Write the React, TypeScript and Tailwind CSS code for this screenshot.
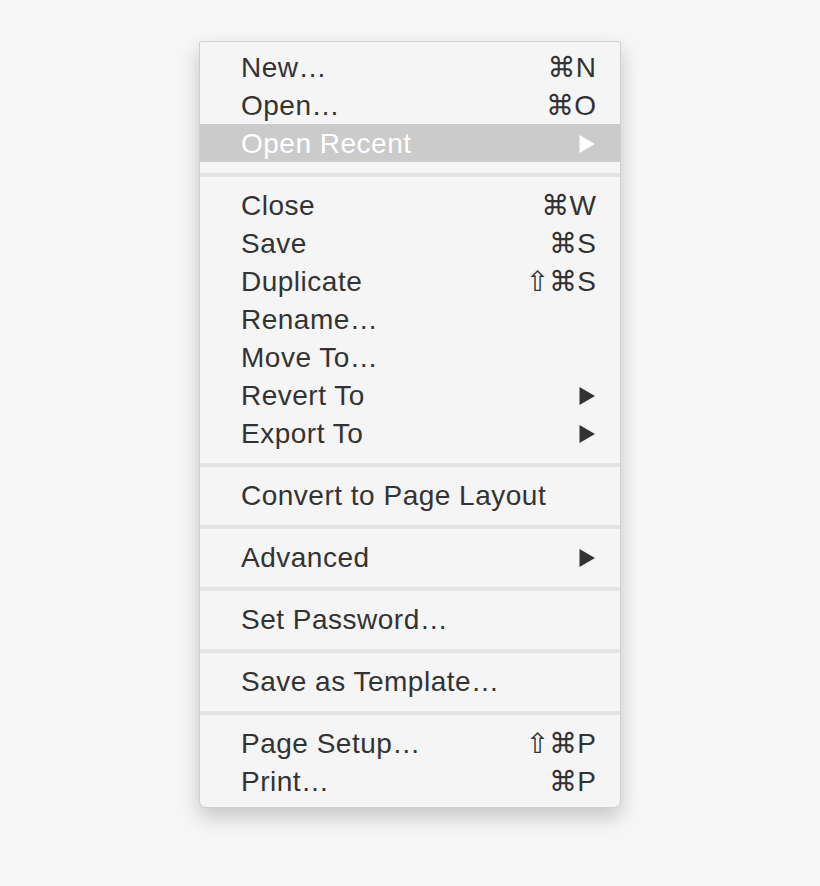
import React from "react";

type Item =
  | { type: "item"; label: string; shortcut?: string; submenu?: boolean; active?: boolean }
  | { type: "sep" };

const items: Item[] = [
  { type: "item", label: "New…", shortcut: "⌘N" },
  { type: "item", label: "Open…", shortcut: "⌘O" },
  { type: "item", label: "Open Recent", submenu: true, active: true },
  { type: "sep" },
  { type: "item", label: "Close", shortcut: "⌘W" },
  { type: "item", label: "Save", shortcut: "⌘S" },
  { type: "item", label: "Duplicate", shortcut: "⇧⌘S" },
  { type: "item", label: "Rename…" },
  { type: "item", label: "Move To…" },
  { type: "item", label: "Revert To", submenu: true },
  { type: "item", label: "Export To", submenu: true },
  { type: "sep" },
  { type: "item", label: "Convert to Page Layout" },
  { type: "sep" },
  { type: "item", label: "Advanced", submenu: true },
  { type: "sep" },
  { type: "item", label: "Set Password…" },
  { type: "sep" },
  { type: "item", label: "Save as Template…" },
  { type: "sep" },
  { type: "item", label: "Page Setup…", shortcut: "⇧⌘P" },
  { type: "item", label: "Print…", shortcut: "⌘P" },
];

function Arrow({ white }: { white?: boolean }) {
  return (
    <svg width="16" height="20" viewBox="0 0 16 20" className="mr-[1px]">
      <path d="M0.5 1 L16 10 L0.5 19 Z" fill={white ? "#ffffff" : "#333333"} />
    </svg>
  );
}

export default function App() {
  return (
    <div
      className="w-[820px] h-[886px] bg-[#f6f6f6] pt-[41px] pl-[199px]"
      style={{ fontFamily: '"Liberation Sans", "DejaVu Sans", Arial, sans-serif' }}
    >
      <div className="w-[422px] bg-[#f5f5f5] border border-[#cfcfcf] rounded-b-[7px] rounded-t-[2px] pt-[6px] pb-[7px] shadow-[0_9px_20px_rgba(0,0,0,0.2)]">
        {items.map((it, i) =>
          it.type === "sep" ? (
            <div key={i} className="pt-[11px] pb-[9px]">
              <div className="h-[4px] bg-[#e4e4e4]" />
            </div>
          ) : (
            <div
              key={i}
              className={`h-[38px] flex items-center justify-between pt-[2px] pl-[41px] pr-[24px] text-[28px] leading-none tracking-[0.5px] ${
                it.active ? "bg-[#cbcbcb] text-white" : "text-[#333333]"
              }`}
            >
              <span>{it.label}</span>
              {it.shortcut ? (
                <span className="tracking-[0px]">{it.shortcut}</span>
              ) : it.submenu ? (
                <Arrow white={it.active} />
              ) : null}
            </div>
          )
        )}
      </div>
    </div>
  );
}
